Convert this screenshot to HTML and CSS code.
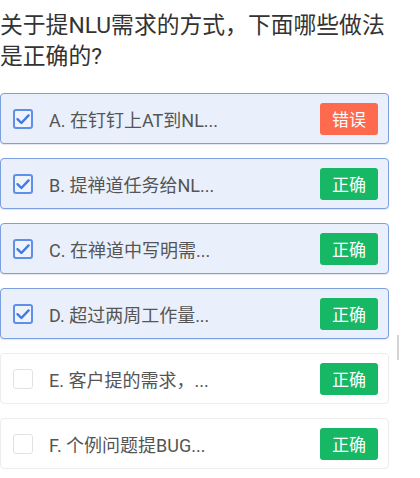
FILE: index.html
```html
<!DOCTYPE html>
<html>
<head>
<meta charset="utf-8">
<link rel="stylesheet" href="styles.css">
</head>
<body>
<div class="page">
  <div class="title">关于提NLU需求的方式，下面哪些做法是正确的?</div>
  <div class="options">
    <div class="opt sel">
      <span class="cb"><svg viewBox="0 0 20 20" width="20" height="20"><path d="M4.5 10.2 L8.4 14 L15.6 6.4" fill="none" stroke="#3f7be0" stroke-width="2.4" stroke-linecap="round" stroke-linejoin="round"/></svg></span>
      <span class="label">A. 在钉钉上AT到NL...</span>
      <span class="badge wrong">错误</span>
    </div>
    <div class="opt sel">
      <span class="cb"><svg viewBox="0 0 20 20" width="20" height="20"><path d="M4.5 10.2 L8.4 14 L15.6 6.4" fill="none" stroke="#3f7be0" stroke-width="2.4" stroke-linecap="round" stroke-linejoin="round"/></svg></span>
      <span class="label">B. 提禅道任务给NL...</span>
      <span class="badge right">正确</span>
    </div>
    <div class="opt sel">
      <span class="cb"><svg viewBox="0 0 20 20" width="20" height="20"><path d="M4.5 10.2 L8.4 14 L15.6 6.4" fill="none" stroke="#3f7be0" stroke-width="2.4" stroke-linecap="round" stroke-linejoin="round"/></svg></span>
      <span class="label">C. 在禅道中写明需...</span>
      <span class="badge right">正确</span>
    </div>
    <div class="opt sel">
      <span class="cb"><svg viewBox="0 0 20 20" width="20" height="20"><path d="M4.5 10.2 L8.4 14 L15.6 6.4" fill="none" stroke="#3f7be0" stroke-width="2.4" stroke-linecap="round" stroke-linejoin="round"/></svg></span>
      <span class="label">D. 超过两周工作量...</span>
      <span class="badge right">正确</span>
    </div>
    <div class="opt">
      <span class="cb empty"></span>
      <span class="label">E. 客户提的需求，...</span>
      <span class="badge right">正确</span>
    </div>
    <div class="opt">
      <span class="cb empty"></span>
      <span class="label">F. 个例问题提BUG...</span>
      <span class="badge right">正确</span>
    </div>
  </div>
  <div class="scroll"></div>
</div>
</body>
</html>
```
FILE: styles.css
```css
html, body {
  margin: 0;
  padding: 0;
  background: #fff;
}
.page {
  position: relative;
  width: 420px;
  height: 478px;
  overflow: hidden;
  font-family: "Roboto", "Noto Sans CJK SC", sans-serif;
}
.title {
  margin-top: 10px;
  width: 392px;
  font-size: 22.8px;
  line-height: 31px;
  color: #333;
}
.options {
  margin-top: 21px;
  display: flex;
  flex-direction: column;
  gap: 14px;
  width: 389px;
}
.opt {
  box-sizing: border-box;
  height: 51px;
  display: flex;
  align-items: center;
  padding: 0 10px 0 12px;
  border: 1px solid #ececec;
  border-radius: 4px;
  background: #fff;
}
.opt.sel {
  background: #e9f0fc;
  border: 1.5px solid #7c9fdf;
  box-shadow: 0 1px 1px rgba(60, 90, 150, 0.15);
}
.cb {
  box-sizing: border-box;
  width: 20px;
  height: 20px;
  border: 2px solid #5f8fe6;
  border-radius: 3px;
  background: #eef3fd;
  display: flex;
  align-items: center;
  justify-content: center;
  flex: none;
}
.cb svg {
  display: block;
  margin: -2px;
}
.cb.empty {
  border: 1.5px solid #e2e2e2;
  background: #fff;
}
.label {
  margin-left: 16px;
  font-size: 18px;
  color: #555;
  flex: 1;
  white-space: nowrap;
}
.badge {
  width: 58px;
  height: 32px;
  border-radius: 3px;
  color: #fff;
  font-size: 17px;
  display: flex;
  align-items: center;
  justify-content: center;
  flex: none;
}
.badge.wrong {
  background: #fd6a4d;
}
.badge.right {
  background: #17b865;
}
.scroll {
  position: absolute;
  left: 397px;
  top: 335px;
  width: 2px;
  height: 25px;
  background: #d4d4d4;
}
```
